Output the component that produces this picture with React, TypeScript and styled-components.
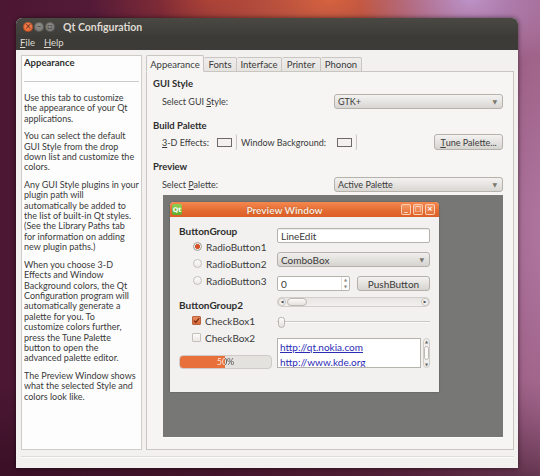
import React from "react";
import styled, { createGlobalStyle } from "styled-components";

const Global = createGlobalStyle`
  html, body { margin: 0; padding: 0; }
  body {
    width: 540px; height: 476px; overflow: hidden;
    font-family: "Lato", "Open Sans", sans-serif;
    -webkit-font-smoothing: antialiased;
  }
`;

const Desktop = styled.div`
  width: 540px;
  height: 476px;
  box-sizing: border-box;
  padding: 18px 0 0 16px;
  overflow: hidden;
  background:
    radial-gradient(ellipse 110px 70px at 470px 0px, rgba(190, 150, 205, 0.95), rgba(190, 150, 205, 0) 100%),
    radial-gradient(ellipse 170px 90px at 330px 0px, rgba(214, 98, 62, 1), rgba(214, 98, 62, 0) 100%),
    radial-gradient(ellipse 120px 60px at 210px 0px, rgba(170, 60, 50, 0.8), rgba(170, 60, 50, 0) 100%),
    radial-gradient(ellipse 90px 260px at 545px 230px, rgba(175, 118, 160, 1), rgba(175, 118, 160, 0) 100%),
    linear-gradient(to bottom, rgba(0, 0, 0, 0) 80%, rgba(40, 10, 25, 0.5) 100%),
    linear-gradient(to right, #4c1733 0%, #5d1e3c 40%, #7b3555 75%, #9a5b80 100%);
`;

const Window = styled.div`
  width: 502px;
  height: 450px;
  display: flex;
  flex-direction: column;
  border-radius: 6px 6px 0 0;
  overflow: hidden;
  box-shadow: 0 0 5px rgba(0, 0, 0, 0.55);
  background: #f2f1f0;
`;

const TitleBar = styled.div`
  height: 17px;
  display: flex;
  align-items: center;
  padding-left: 7px;
  gap: 1px;
  background: linear-gradient(#4a4843, #3e3d39);
`;

const WinButton = styled.div<{ $close?: boolean }>`
  width: 10px;
  height: 10px;
  border-radius: 50%;
  display: flex;
  align-items: center;
  justify-content: center;
  font-size: 8px;
  line-height: 1;
  font-family: "DejaVu Sans", sans-serif;
  color: ${(p) => (p.$close ? "#5a2510" : "#3c3b37")};
  background: ${(p) =>
    p.$close
      ? "radial-gradient(circle at 50% 35%, #f7895a, #e1561f)"
      : "radial-gradient(circle at 50% 35%, #8f8e89, #6d6c68)"};
  box-shadow: inset 0 0 0 1px rgba(0, 0, 0, 0.25);
`;

const Title = styled.div`
  margin-left: 7px;
  color: #dfdbd2;
  font-weight: 700;
  font-size: 10.5px;
`;

const MenuBar = styled.div`
  height: 15px;
  display: flex;
  align-items: center;
  gap: 9px;
  padding-left: 4px;
  background: #3c3b37;
  color: #dfdbd2;
  font-size: 9.5px;
`;

const Body = styled.div`
  flex: 1;
  display: flex;
  flex-direction: column;
  padding: 5px 4px 0 5px;
`;

const MainRow = styled.div`
  height: 395px;
  display: flex;
  gap: 4px;
`;

const LeftPanel = styled.div`
  width: 121px;
  box-sizing: border-box;
  background: #fdfdfd;
  border: 1px solid #cfccc7;
  padding: 0 2px;
  color: #3a3a3a;
  font-size: 9px;
  overflow: hidden;
`;

const PanelHeading = styled.div`
  font-weight: 700;
  font-size: 9.5px;
  line-height: 14px;
  color: #2e2e2e;
`;

const PanelRule = styled.div`
  height: 1px;
  background: #cdcbc8;
  margin: 11px 0 11px 0;
`;

const Para = styled.p`
  margin: 0 0 7px 0;
  line-height: 10.4px;
  white-space: nowrap;
`;

const TabWidget = styled.div`
  flex: 1;
  display: flex;
  flex-direction: column;
`;

const TabBar = styled.div`
  height: 17px;
  display: flex;
  align-items: flex-end;
  margin-bottom: -1px;
  position: relative;
  z-index: 1;
`;

const Tab = styled.div<{ $w: number; $active?: boolean }>`
  width: ${(p) => p.$w}px;
  height: ${(p) => (p.$active ? 17 : 15)}px;
  box-sizing: border-box;
  display: flex;
  align-items: center;
  justify-content: center;
  font-size: 9.5px;
  color: #3a3a3a;
  border: 1px solid #c9c6c1;
  border-bottom: ${(p) => (p.$active ? "1px solid #f6f5f4" : "1px solid #c9c6c1")};
  border-left-width: ${(p) => (p.$active ? 1 : 0)}px;
  border-radius: 2px 2px 0 0;
  background: ${(p) => (p.$active ? "#f6f5f4" : "linear-gradient(#eeedeb, #e6e4e1)")};
  padding-top: ${(p) => (p.$active ? 1 : 0)}px;
`;

const Pane = styled.div`
  flex: 1;
  display: flex;
  flex-direction: column;
  box-sizing: border-box;
  border: 1px solid #c9c6c1;
  background: #f6f5f4;
  padding: 5px 10px 12px 6px;
  color: #3a3a3a;
  font-size: 9px;
`;

const SectionHead = styled.div<{ $mt: number }>`
  margin-top: ${(p) => p.$mt}px;
  height: 14px;
  line-height: 14px;
  font-weight: 700;
  font-size: 9.5px;
  color: #2e2e2e;
`;

const FormRow = styled.div<{ $mt: number }>`
  margin-top: ${(p) => p.$mt}px;
  height: 16px;
  display: flex;
  align-items: center;
  padding-left: 9px;
`;

const FixedLabel = styled.span<{ $w: number; $ml?: number }>`
  width: ${(p) => p.$w}px;
  margin-left: ${(p) => p.$ml ?? 0}px;
  flex: none;
  white-space: nowrap;
`;

const Combo = styled.div<{ $w: number }>`
  width: ${(p) => p.$w}px;
  height: 15px;
  box-sizing: border-box;
  margin-left: auto;
  display: flex;
  align-items: center;
  padding: 0 5px 0 3px;
  border: 1px solid #b5b1ab;
  border-radius: 3px;
  background: linear-gradient(#f3f2f1, #d9d7d3);
  color: #3a3a3a;
  font-size: 9px;
`;

const ComboText = styled.span`
  flex: 1;
`;

const Arrow = styled.span`
  font-size: 6px;
  color: #7a7770;
  font-family: "DejaVu Sans", sans-serif;
`;

const ColorButton = styled.div`
  width: 24px;
  height: 16px;
  box-sizing: border-box;
  flex: none;
  display: flex;
  align-items: center;
  justify-content: center;
  border-right: 1px solid #c9c6c1;
  border-radius: 2px;
`;

const Swatch = styled.div`
  width: 13px;
  height: 7px;
  border: 1px solid #6d6a66;
  background: #f2f1f0;
`;

const PushBtn = styled.div<{ $w: number; $h?: number; $size?: number }>`
  width: ${(p) => p.$w}px;
  height: ${(p) => p.$h ?? 16}px;
  box-sizing: border-box;
  flex: none;
  display: flex;
  align-items: center;
  justify-content: center;
  border: 1px solid #b5b1ab;
  border-radius: 3px;
  background: linear-gradient(#f3f2f1, #d6d4cf);
  color: #3a3a3a;
  font-size: ${(p) => p.$size ?? 9}px;
  white-space: nowrap;
`;

const PushRight = styled(PushBtn)`
  margin-left: auto;
`;

const PreviewArea = styled.div`
  margin: 3px 0 0 10px;
  flex: 1;
  background: #777776;
  padding: 7px;
  box-shadow: 0 1px 0 #fdfdfd;
`;

const PreviewWindow = styled.div`
  width: 269px;
  height: 190px;
  display: flex;
  flex-direction: column;
  border-radius: 4px 4px 0 0;
  overflow: hidden;
  background: #f2f1f0;
  box-shadow: 0 0 2px rgba(0, 0, 0, 0.35);
`;

const PreviewTitle = styled.div`
  height: 15px;
  display: flex;
  align-items: center;
  padding: 0 4px 0 2px;
  background: linear-gradient(#f4884f, #e36a31 60%, #dc5f26);
`;

const QtLogo = styled.div`
  width: 10px;
  height: 11px;
  border-radius: 2px;
  background: linear-gradient(#8fd14f, #5fae2e);
  color: #fff;
  font-weight: 700;
  font-size: 6.5px;
  display: flex;
  align-items: center;
  justify-content: center;
  font-family: "DejaVu Sans", sans-serif;
`;

const PreviewTitleText = styled.div`
  flex: 1;
  text-align: center;
  color: #fbe9dc;
  font-weight: 700;
  font-size: 10px;
  text-shadow: 0 0 1px rgba(120, 40, 0, 0.6);
  padding-right: 12px;
`;

const SmallBtn = styled.div`
  width: 10px;
  height: 11px;
  box-sizing: border-box;
  margin-left: 2px;
  border: 1px solid rgba(255, 220, 200, 0.85);
  border-radius: 2px;
  background: linear-gradient(#f59a66, #e46e36);
  color: #fff;
  font-size: 7px;
  line-height: 1;
  display: flex;
  align-items: center;
  justify-content: center;
  font-family: "DejaVu Sans", sans-serif;
  font-weight: 700;
`;

const PreviewBody = styled.div`
  flex: 1;
  display: grid;
  grid-template-columns: 93px 153px;
  column-gap: 5px;
  padding: 0 9px;
  font-size: 10px;
  color: #3a3a3a;
`;

const Col = styled.div`
  display: flex;
  flex-direction: column;
`;

const GroupTitle = styled.div<{ $mt: number }>`
  margin-top: ${(p) => p.$mt}px;
  height: 14px;
  line-height: 14px;
  font-weight: 700;
  font-size: 10px;
  color: #2e2e2e;
  white-space: nowrap;
`;

const OptionRow = styled.div`
  height: 17px;
  display: flex;
  align-items: center;
  padding-left: 13px;
  gap: 4px;
  white-space: nowrap;
`;

const Radio = styled.div<{ $on?: boolean }>`
  width: 9px;
  height: 9px;
  box-sizing: border-box;
  border-radius: 50%;
  border: 1px solid ${(p) => (p.$on ? "#a09c95" : "#c4c0ba")};
  background: ${(p) =>
    p.$on
      ? "radial-gradient(circle, #d4532a 0 2.2px, #f0eeeb 2.8px)"
      : "linear-gradient(#fbfbfa, #ebe9e6)"};
  margin-left: 1px;
  flex: none;
`;

const CheckBox = styled.div<{ $on?: boolean }>`
  width: 9px;
  height: 9px;
  box-sizing: border-box;
  border-radius: 1px;
  border: 1px solid ${(p) => (p.$on ? "#b4653f" : "#c4c0ba")};
  background: ${(p) => (p.$on ? "linear-gradient(#ec8a5c, #d9683a)" : "linear-gradient(#fbfbfa, #ebe9e6)")};
  display: flex;
  align-items: center;
  justify-content: center;
  flex: none;
`;

const Progress = styled.div<{ $pct: number }>`
  margin-top: 9px;
  height: 14px;
  box-sizing: border-box;
  border-radius: 4px;
  border: 1px solid #cfccc7;
  background:
    linear-gradient(to right, transparent 0, transparent ${(p) => p.$pct}%, rgba(255,255,255,0) ${(p) => p.$pct}%),
    linear-gradient(to right, #e8703a 0, #e8703a ${(p) => p.$pct}%, #e4e2df ${(p) => p.$pct}%);
  display: flex;
  align-items: center;
  justify-content: center;
  overflow: hidden;
`;

const ProgressText = styled.span<{ $pct: number }>`
  font-size: 9px;
  line-height: 12px;
  background: linear-gradient(to right, #fff4ec 0, #fff4ec 46%, #4a4845 46%);
  -webkit-background-clip: text;
  background-clip: text;
  color: transparent;
`;

const LineEdit = styled.div<{ $mt: number }>`
  margin-top: ${(p) => p.$mt}px;
  height: 15px;
  box-sizing: border-box;
  display: flex;
  align-items: center;
  padding-left: 3px;
  border: 1px solid #b6b2ac;
  border-radius: 2px;
  background: #fff;
  box-shadow: inset 0 1px 1px rgba(0, 0, 0, 0.08);
`;

const PreviewCombo = styled.div<{ $mt: number }>`
  margin-top: ${(p) => p.$mt}px;
  height: 15px;
  box-sizing: border-box;
  display: flex;
  align-items: center;
  padding: 0 5px 0 3px;
  border: 1px solid #b5b1ab;
  border-radius: 3px;
  background: linear-gradient(#f0efed, #d6d4cf);
`;

const SpinRow = styled.div<{ $mt: number }>`
  margin-top: ${(p) => p.$mt}px;
  height: 15px;
  display: flex;
  gap: 7px;
`;

const SpinBox = styled.div`
  width: 73px;
  height: 15px;
  box-sizing: border-box;
  display: flex;
  align-items: center;
  padding-left: 3px;
  border: 1px solid #b6b2ac;
  border-radius: 2px;
  background: #fff;
`;

const SpinArrows = styled.div`
  margin-left: auto;
  width: 7px;
  height: 13px;
  border-left: 1px solid #e2e0dc;
  display: flex;
  flex-direction: column;
  align-items: center;
  justify-content: space-between;
  font-size: 4px;
  line-height: 6px;
  color: #8a8781;
  font-family: "DejaVu Sans", sans-serif;
`;

const HScroll = styled.div<{ $mt: number }>`
  margin-top: ${(p) => p.$mt}px;
  height: 10px;
  box-sizing: border-box;
  display: flex;
  align-items: center;
  padding: 0 1px;
  border-radius: 5px;
  background: linear-gradient(#e6e4e1, #f2f1ef);
  box-shadow: inset 0 0 0 1px #d2cfca;
`;

const ScrollCap = styled.div`
  width: 8px;
  height: 8px;
  box-sizing: border-box;
  border-radius: 50%;
  border: 1px solid #c8c4bf;
  background: #f8f7f6;
  font-size: 4px;
  line-height: 6px;
  text-align: center;
  color: #555;
  font-family: "DejaVu Sans", sans-serif;
  flex: none;
`;

const ScrollHandle = styled.div`
  width: 20px;
  height: 8px;
  box-sizing: border-box;
  border-radius: 4px;
  border: 1px solid #bdb9b3;
  background: linear-gradient(#fbfbfa, #e4e2de);
  margin-left: 1px;
`;

const Spacer = styled.span`
  flex: 1;
`;

const Slider = styled.div<{ $mt: number }>`
  margin-top: ${(p) => p.$mt}px;
  height: 14px;
  display: flex;
  align-items: center;
  background: linear-gradient(transparent 6px, #cbc8c3 6px, #cbc8c3 7px, #fafafa 7px, #fafafa 8px, transparent 8px);
`;

const SliderHandle = styled.div`
  width: 7px;
  height: 11px;
  box-sizing: border-box;
  margin-left: 1px;
  border-radius: 3px 3px 4px 4px;
  border: 1px solid #b8b4ae;
  background: linear-gradient(#fbfbfa, #e4e2de);
`;

const BrowserRow = styled.div<{ $mt: number }>`
  margin-top: ${(p) => p.$mt}px;
  height: 30px;
  display: flex;
  gap: 2px;
`;

const Browser = styled.div`
  flex: 1;
  box-sizing: border-box;
  border: 1px solid #b6b2ac;
  background: #fff;
  overflow: hidden;
  padding: 2px 0 0 2px;
`;

const Link = styled.div`
  color: #2b2bb5;
  text-decoration: underline;
  font-size: 10px;
  line-height: 12px;
  height: 12px;
  margin-bottom: 3px;
`;

const VScroll = styled.div`
  width: 7px;
  box-sizing: border-box;
  border-radius: 4px;
  border: 1px solid #d0cdc8;
  background: #f0efed;
  display: flex;
  flex-direction: column;
  align-items: center;
  justify-content: space-between;
  font-size: 4px;
  line-height: 5px;
  color: #666;
  font-family: "DejaVu Sans", sans-serif;
`;

const VHandle = styled.div`
  width: 5px;
  height: 14px;
  box-sizing: border-box;
  border-radius: 3px;
  border: 1px solid #bdb9b3;
  background: #fafaf9;
`;

const StatusBar = styled.div`
  margin-top: 6px;
  height: 1px;
  background: #dedcd9;
  box-shadow: 0 1px 0 #fbfbfa;
`;

const U = styled.span`
  text-decoration: underline;
`;

const paragraphs: string[][] = [
  ["Use this tab to customize", "the appearance of your Qt", "applications."],
  ["You can select the default", "GUI Style from the drop", "down list and customize the", "colors."],
  [
    "Any GUI Style plugins in your",
    "plugin path will",
    "automatically be added to",
    "the list of built-in Qt styles.",
    "(See the Library Paths tab",
    "for information on adding",
    "new plugin paths.)",
  ],
  [
    "When you choose 3-D",
    "Effects and Window",
    "Background colors, the Qt",
    "Configuration program will",
    "automatically generate a",
    "palette for you. To",
    "customize colors further,",
    "press the Tune Palette",
    "button to open the",
    "advanced palette editor.",
  ],
  ["The Preview Window shows", "what the selected Style and", "colors look like."],
];

const tabs = [
  { label: "Appearance", w: 58, active: true },
  { label: "Fonts", w: 33 },
  { label: "Interface", w: 45 },
  { label: "Printer", w: 39 },
  { label: "Phonon", w: 41 },
];

const Check = () => (
  <svg width="7" height="7" viewBox="0 0 7 7">
    <path d="M1 3.6 L2.8 5.4 L6.2 1.2" fill="none" stroke="#6b2c12" strokeWidth="1.2" />
  </svg>
);

export default function App() {
  const pct = 50;
  return (
    <>
      <Global />
      <Desktop>
        <Window>
          <TitleBar>
            <WinButton $close>×</WinButton>
            <WinButton>–</WinButton>
            <WinButton>▫</WinButton>
            <Title>Qt Configuration</Title>
          </TitleBar>
          <MenuBar>
            <span>
              <U>F</U>ile
            </span>
            <span>
              <U>H</U>elp
            </span>
          </MenuBar>
          <Body>
            <MainRow>
              <LeftPanel>
                <PanelHeading>Appearance</PanelHeading>
                <PanelRule />
                {paragraphs.map((lines, i) => (
                  <Para key={i}>
                    {lines.map((l, j) => (
                      <React.Fragment key={j}>
                        {l}
                        {j < lines.length - 1 && <br />}
                      </React.Fragment>
                    ))}
                  </Para>
                ))}
              </LeftPanel>
              <TabWidget>
                <TabBar>
                  {tabs.map((t) => (
                    <Tab key={t.label} $w={t.w} $active={t.active}>
                      {t.label}
                    </Tab>
                  ))}
                </TabBar>
                <Pane>
                  <SectionHead $mt={0}>GUI Style</SectionHead>
                  <FormRow $mt={2}>
                    <span>
                      Select GUI <U>S</U>tyle:
                    </span>
                    <Combo $w={169}>
                      <ComboText>GTK+</ComboText>
                      <Arrow>▼</Arrow>
                    </Combo>
                  </FormRow>
                  <SectionHead $mt={10}>Build Palette</SectionHead>
                  <FormRow $mt={1}>
                    <FixedLabel $w={51}>
                      <U>3</U>-D Effects:
                    </FixedLabel>
                    <ColorButton>
                      <Swatch />
                    </ColorButton>
                    <FixedLabel $w={92} $ml={4}>
                      Window Back<U>g</U>round:
                    </FixedLabel>
                    <ColorButton>
                      <Swatch />
                    </ColorButton>
                    <PushRight $w={69}>
                      <U>T</U>une Palette...
                    </PushRight>
                  </FormRow>
                  <SectionHead $mt={10}>Preview</SectionHead>
                  <FormRow $mt={2}>
                    <span>
                      Select <U>P</U>alette:
                    </span>
                    <Combo $w={169}>
                      <ComboText>Active Palette</ComboText>
                      <Arrow>▼</Arrow>
                    </Combo>
                  </FormRow>
                  <PreviewArea>
                    <PreviewWindow>
                      <PreviewTitle>
                        <QtLogo>Qt</QtLogo>
                        <PreviewTitleText>Preview Window</PreviewTitleText>
                        <SmallBtn>_</SmallBtn>
                        <SmallBtn>□</SmallBtn>
                        <SmallBtn>×</SmallBtn>
                      </PreviewTitle>
                      <PreviewBody>
                        <Col>
                          <GroupTitle $mt={7}>ButtonGroup</GroupTitle>
                          <OptionRow>
                            <Radio $on />
                            RadioButton1
                          </OptionRow>
                          <OptionRow>
                            <Radio />
                            RadioButton2
                          </OptionRow>
                          <OptionRow>
                            <Radio />
                            RadioButton3
                          </OptionRow>
                          <GroupTitle $mt={9}>ButtonGroup2</GroupTitle>
                          <OptionRow>
                            <CheckBox $on>
                              <Check />
                            </CheckBox>
                            CheckBox1
                          </OptionRow>
                          <OptionRow>
                            <CheckBox />
                            CheckBox2
                          </OptionRow>
                          <Progress $pct={pct}>
                            <ProgressText $pct={pct}>{pct}%</ProgressText>
                          </Progress>
                        </Col>
                        <Col>
                          <LineEdit $mt={11}>LineEdit</LineEdit>
                          <PreviewCombo $mt={9}>
                            <ComboText>ComboBox</ComboText>
                            <Arrow>▼</Arrow>
                          </PreviewCombo>
                          <SpinRow $mt={9}>
                            <SpinBox>
                              0
                              <SpinArrows>
                                <span>▲</span>
                                <span>▼</span>
                              </SpinArrows>
                            </SpinBox>
                            <PushBtn $w={73} $h={15} $size={10}>
                              PushButton
                            </PushBtn>
                          </SpinRow>
                          <HScroll $mt={6}>
                            <ScrollCap>◀</ScrollCap>
                            <ScrollHandle />
                            <Spacer />
                            <ScrollCap>▶</ScrollCap>
                          </HScroll>
                          <Slider $mt={8}>
                            <SliderHandle />
                          </Slider>
                          <BrowserRow $mt={9}>
                            <Browser>
                              <Link>http://qt.nokia.com</Link>
                              <Link>http://www.kde.org</Link>
                            </Browser>
                            <VScroll>
                              <span>▲</span>
                              <VHandle />
                              <span>▼</span>
                            </VScroll>
                          </BrowserRow>
                        </Col>
                      </PreviewBody>
                    </PreviewWindow>
                  </PreviewArea>
                </Pane>
              </TabWidget>
            </MainRow>
            <StatusBar />
          </Body>
        </Window>
      </Desktop>
    </>
  );
}
